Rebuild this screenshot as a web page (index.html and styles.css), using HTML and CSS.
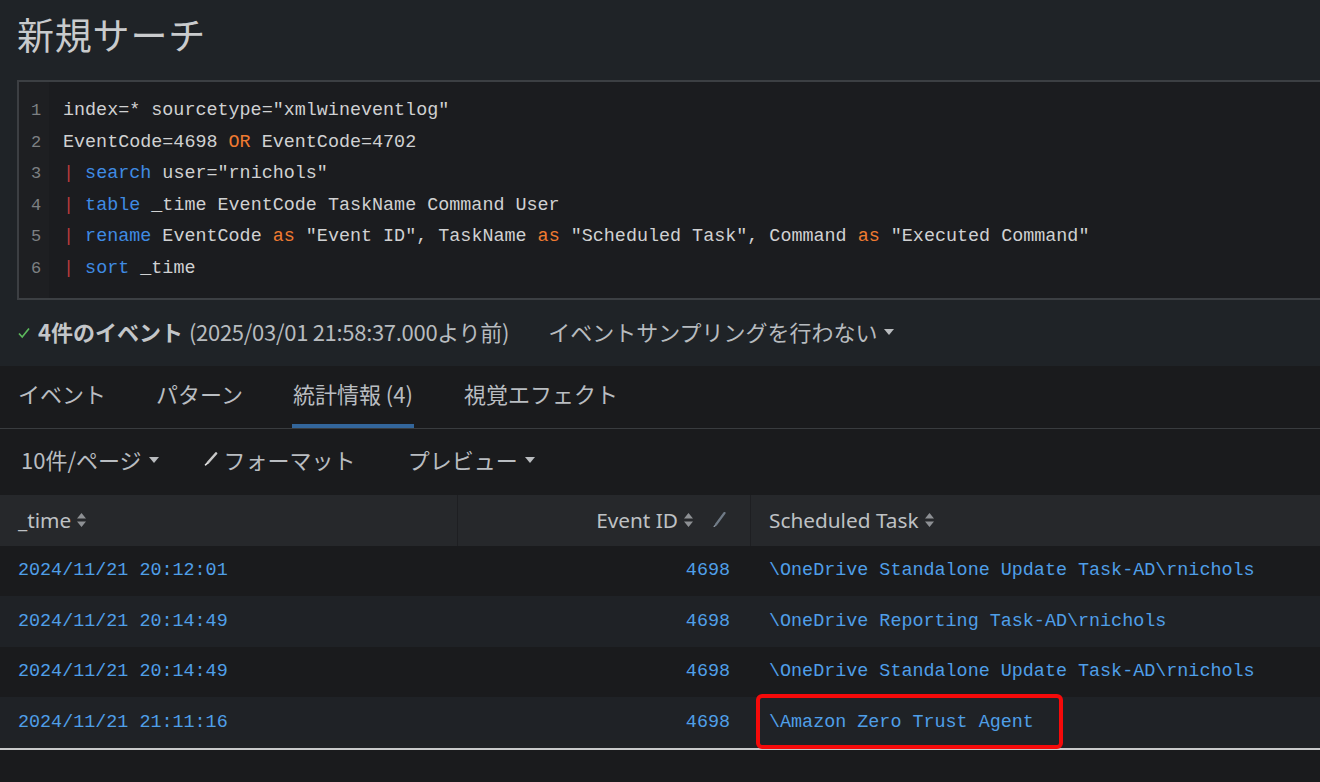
FILE: index.html
```html
<!DOCTYPE html>
<html lang="ja">
<head>
<meta charset="utf-8">
<title>新規サーチ</title>
<link rel="stylesheet" href="styles.css">
</head>
<body>
<header class="page-head">
  <h1 class="title">新規サーチ</h1>
</header>

<section class="editor">
  <div class="gutter">
    <span>1</span><span>2</span><span>3</span><span>4</span><span>5</span><span>6</span>
  </div>
  <pre class="code"><span class="ln">index=* sourcetype="xmlwineventlog"</span>
<span class="ln">EventCode=4698 <span class="op">OR</span> EventCode=4702</span>
<span class="ln"><span class="pipe">|</span> <span class="kw">search</span> user="rnichols"</span>
<span class="ln"><span class="pipe">|</span> <span class="kw">table</span> _time EventCode TaskName Command User</span>
<span class="ln"><span class="pipe">|</span> <span class="kw">rename</span> EventCode <span class="op">as</span> "Event ID", TaskName <span class="op">as</span> "Scheduled Task", Command <span class="op">as</span> "Executed Command"</span>
<span class="ln"><span class="pipe">|</span> <span class="kw">sort</span> _time</span></pre>
</section>

<div class="status">
  <svg class="check" width="12" height="12" viewBox="0 0 12 12"><path d="M1 6.5 L4.2 10 L11 1.5" fill="none" stroke="#5cb85c" stroke-width="1.7"/></svg>
  <strong class="count">4件のイベント</strong>
  <span class="range">(2025/03/01 21:58:37.000より前)</span>
  <span class="sampling">イベントサンプリングを行わない<svg class="caret" width="10" height="6" viewBox="0 0 10 6"><path d="M0 0 H10 L5 6 Z" fill="#b9bcbf"/></svg></span>
</div>

<nav class="tabs">
  <span class="tab">イベント</span>
  <span class="tab">パターン</span>
  <span class="tab active">統計情報 (4)</span>
  <span class="tab">視覚エフェクト</span>
</nav>

<div class="toolbar">
  <span class="tool">10件/ページ<svg class="caret" width="10" height="6" viewBox="0 0 10 6"><path d="M0 0 H10 L5 6 Z" fill="#b9bcbf"/></svg></span>
  <span class="tool"><svg class="pencil" width="14" height="14" viewBox="0 0 14 14"><path d="M12 1.5 L4 10.5" stroke="#c8c8c8" stroke-width="2.6" stroke-linecap="round"/><path d="M3.2 11.3 L1.5 12.8" stroke="#e6e6e6" stroke-width="1.6" stroke-linecap="round"/></svg>フォーマット</span>
  <span class="tool">プレビュー<svg class="caret" width="10" height="6" viewBox="0 0 10 6"><path d="M0 0 H10 L5 6 Z" fill="#b9bcbf"/></svg></span>
</div>

<div class="table">
  <div class="th">_time<svg class="sort" width="9" height="14" viewBox="0 0 9 14"><path d="M4.5 0 L9 5.5 H0 Z M0 8.5 H9 L4.5 14 Z" fill="#8d9094"/></svg></div>
  <div class="th num">Event ID<svg class="sort" width="9" height="14" viewBox="0 0 9 14"><path d="M4.5 0 L9 5.5 H0 Z M0 8.5 H9 L4.5 14 Z" fill="#8d9094"/></svg><svg class="edit" width="13" height="15" viewBox="0 0 13 15"><path d="M11.5 1 L3 12.5" stroke="#6f7a86" stroke-width="2.2" stroke-linecap="round"/><path d="M2.2 13.6 L1.2 14.5" stroke="#8a96a2" stroke-width="1.4" stroke-linecap="round"/></svg></div>
  <div class="th">Scheduled Task<svg class="sort" width="9" height="14" viewBox="0 0 9 14"><path d="M4.5 0 L9 5.5 H0 Z M0 8.5 H9 L4.5 14 Z" fill="#8d9094"/></svg></div>

  <div class="td">2024/11/21 20:12:01</div>
  <div class="td num">4698</div>
  <div class="td">\OneDrive Standalone Update Task-AD\rnichols</div>

  <div class="td alt">2024/11/21 20:14:49</div>
  <div class="td alt num">4698</div>
  <div class="td alt">\OneDrive Reporting Task-AD\rnichols</div>

  <div class="td">2024/11/21 20:14:49</div>
  <div class="td num">4698</div>
  <div class="td">\OneDrive Standalone Update Task-AD\rnichols</div>

  <div class="td alt">2024/11/21 21:11:16</div>
  <div class="td alt num">4698</div>
  <div class="td alt marked">\Amazon Zero Trust Agent<span class="highlight"></span></div>
</div>
<div class="table-end"></div>
</body>
</html>
```

FILE: styles.css
```css
* { box-sizing: border-box; }

html, body {
  margin: 0;
  padding: 0;
}

body {
  width: 1320px;
  height: 782px;
  overflow: hidden;
  background: #1a1b1d;
  font-family: "Noto Sans CJK JP", "Noto Sans", sans-serif;
  color: #c3c6c9;
}

.page-head {
  height: 80px;
  background: #1f2327;
  padding: 10px 0 0 17px;
}

.title {
  margin: 0;
  font-size: 37px;
  font-weight: 400;
  line-height: 48px;
  color: #c9cbcd;
  letter-spacing: 0.8px;
}

.editor {
  display: flex;
  height: 220px;
  background: #1f2327;
  padding-left: 17px;
}

.gutter {
  width: 32px;
  flex: none;
  background: #1e1f22;
  border: 2px solid #3c3f43;
  border-right: none;
  padding-top: 13px;
  display: flex;
  flex-direction: column;
  align-items: center;
  font-family: "Liberation Mono", "DejaVu Sans Mono", monospace;
  font-size: 17px;
  color: #7d8083;
}

.gutter span {
  height: 31.6px;
  line-height: 31.6px;
  padding-left: 4px;
}

.code {
  flex: 1;
  margin: 0;
  background: #1b1c1f;
  border-top: 2px solid #3c3f43;
  border-bottom: 2px solid #3c3f43;
  padding: 13px 0 0 14px;
  font-family: "Liberation Mono", "DejaVu Sans Mono", monospace;
  font-size: 18.4px;
  line-height: 31.6px;
  color: #d0d1d2;
  white-space: pre;
  overflow: hidden;
}

.kw { color: #3f8be3; }
.op { color: #ef7a31; }
.pipe { color: #b8393c; }

.status {
  height: 66px;
  background: #1f2327;
  display: flex;
  align-items: center;
  padding-left: 18px;
  padding-bottom: 4px;
  font-size: 22px;
  color: #b7bbbf;
}

.check { margin-right: 8px; margin-top: 3px; }

.count {
  font-weight: 700;
  color: #c3c6c9;
  margin-right: 6px;
}

.range {
  margin-right: 39px;
  letter-spacing: -0.3px;
}

.sampling {
  display: inline-flex;
  align-items: center;
}

.caret { margin-left: 7px; margin-top: 2px; }

.tabs {
  height: 63px;
  display: flex;
  align-items: stretch;
  padding-left: 18px;
  gap: 50px;
  border-bottom: 1px solid #393c3f;
  font-size: 22px;
  color: #b9bdc1;
}

.tab {
  display: flex;
  align-items: center;
  border-bottom: 4px solid transparent;
  padding-bottom: 4px;
}

.tab.active {
  border-bottom-color: #33669b;
  padding: 0 1px 4px;
  margin-left: -1px;
}

.toolbar {
  height: 66px;
  display: flex;
  align-items: center;
  padding-left: 21px;
  padding-bottom: 6px;
  font-size: 22px;
  color: #b9bdc1;
}

.tool {
  display: inline-flex;
  align-items: center;
}

.tool:nth-child(2) { margin-left: 45px; }
.tool:nth-child(3) { margin-left: 52px; }

.pencil { margin-right: 6px; }

.table {
  display: grid;
  grid-template-columns: 457px 293px 1fr;
  grid-auto-rows: 50.5px;
}

.th {
  height: 51px;
  background: #26282b;
  display: flex;
  align-items: center;
  padding-left: 18px;
  padding-bottom: 2px;
  font-family: "Noto Sans", "Noto Sans CJK JP", sans-serif;
  font-size: 20.8px;
  color: #bec1c4;
  border-left: 1px solid #1e1f22;
}

.th:first-child { border-left: none; }

.th.num {
  justify-content: flex-end;
  padding-right: 24px;
}

.sort { margin-left: 6px; }

.edit { margin-left: 20px; }

.td {
  display: flex;
  align-items: center;
  padding-left: 18px;
  background: #1a1b1d;
  font-family: "Liberation Mono", "DejaVu Sans Mono", monospace;
  font-size: 18.4px;
  color: #4f9fe8;
  white-space: pre;
}

.td.alt { background: #1f2226; }

.td.num {
  justify-content: flex-end;
  padding-right: 20px;
}

.td:nth-child(3n) { padding-left: 19px; }

.marked { position: relative; }

.highlight {
  position: absolute;
  left: 6px;
  top: -3px;
  width: 307px;
  height: 55px;
  border: 4px solid #f50a0a;
  border-radius: 6px;
  z-index: 2;
}

.table-end {
  height: 2px;
  background: #c9cacb;
}
```
